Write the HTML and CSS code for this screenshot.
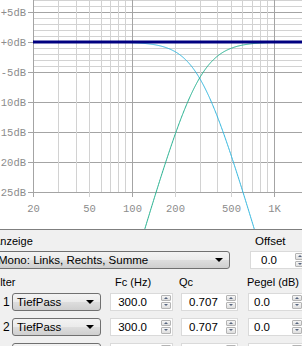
FILE: index.html
```html
<!DOCTYPE html>
<html lang="de">
<head>
  <meta charset="UTF-8" />
  <meta name="viewport" content="width=device-width, initial-scale=1" />
  <title>Frequenzweiche</title>
  <link rel="stylesheet" href="styles.css">
</head>
<body>

<div class="plot">
  <svg id="chart" width="302" height="229" xmlns="http://www.w3.org/2000/svg"></svg>
</div>

<div class="panel">
  <div class="display-row">
    <div class="display-group">
      <div class="label">Anzeige</div>
      <div class="combo combo-wide"><span>Mono: Links, Rechts, Summe</span><i class="arrow"></i></div>
    </div>
    <div class="offset-group">
      <div class="label label-offset">Offset</div>
      <div class="spin spin-offset">
        <div class="spin-field">0.0</div>
        <div class="spin-btns"><b class="up"></b><b class="down"></b></div>
      </div>
    </div>
  </div>

  <div class="filter-grid">
    <div class="head head-filter">Filter</div>
    <div class="head head-fc">Fc (Hz)</div>
    <div class="head head-qc">Qc</div>
    <div class="head head-pegel">Pegel (dB)</div>

    <div class="num">1</div>
    <div class="combo combo-type"><span>TiefPass</span><i class="arrow"></i></div>
    <div class="spin spin-fc"><div class="spin-field">300.0</div><div class="spin-btns"><b class="up"></b><b class="down"></b></div></div>
    <div class="spin spin-qc"><div class="spin-field">0.707</div><div class="spin-btns"><b class="up"></b><b class="down"></b></div></div>
    <div class="spin spin-pegel"><div class="spin-field">0.0</div><div class="spin-btns"><b class="up"></b><b class="down"></b></div></div>

    <div class="num">2</div>
    <div class="combo combo-type"><span>TiefPass</span><i class="arrow"></i></div>
    <div class="spin spin-fc"><div class="spin-field">300.0</div><div class="spin-btns"><b class="up"></b><b class="down"></b></div></div>
    <div class="spin spin-qc"><div class="spin-field">0.707</div><div class="spin-btns"><b class="up"></b><b class="down"></b></div></div>
    <div class="spin spin-pegel"><div class="spin-field">0.0</div><div class="spin-btns"><b class="up"></b><b class="down"></b></div></div>

    <div class="num">3</div>
    <div class="combo combo-type"><span>HochPass</span><i class="arrow"></i></div>
    <div class="spin spin-fc"><div class="spin-field">300.0</div><div class="spin-btns"><b class="up"></b><b class="down"></b></div></div>
    <div class="spin spin-qc"><div class="spin-field">0.707</div><div class="spin-btns"><b class="up"></b><b class="down"></b></div></div>
    <div class="spin spin-pegel"><div class="spin-field">0.0</div><div class="spin-btns"><b class="up"></b><b class="down"></b></div></div>
  </div>
</div>

<script src="script.js"></script>
</body>
</html>
```

FILE: styles.css
```css
* {
  margin: 0; padding: 0; box-sizing: border-box;
}
html, body {
  width: 302px;
  height: 346px;
  overflow: hidden;
}
body {
  background: #f0f0f0;
  font-family: 'Liberation Sans', Arial, sans-serif;
  font-size: 11px;
  color: #000;
}
.plot {
  height: 229px;
  background: #fff;
  overflow: hidden;
}
.plot svg {
  display: block;
}
.grid-minor { stroke: #d2d2d2; stroke-width: 1; }
.grid-major { stroke: #a4a4a4; stroke-width: 1; }
.axis-text {
  font-family: 'Liberation Mono', 'Courier New', monospace;
  font-size: 10.5px;
  fill: #8c8c8c;
}
.zero-line { stroke: #000080; stroke-width: 3; }
.curve { fill: none; stroke-width: 1; }
.curve-lp { stroke: #30b6de; }
.curve-hp { stroke: #22b08e; }

.panel {
  border-top: 1px solid #7f7f7f;
  padding-top: 4px;
}
.display-row {
  display: flex;
  gap: 20px;
}
.display-group {
  margin-left: -8px;
  width: 238px;
  flex-shrink: 0;
}
.label {
  height: 14px;
  line-height: 14px;
  margin-bottom: 3px;
  padding-left: 1px;
}
.label-offset {
  padding-left: 5px;
  font-size: 11.5px;
}
.offset-group {
  width: 57px;
  flex-shrink: 0;
}

.combo {
  height: 18px;
  display: flex;
  align-items: center;
  justify-content: space-between;
  border: 1px solid #707070;
  border-radius: 3px;
  background: linear-gradient(#f3f3f3 0%, #ebebeb 48%, #dddddd 52%, #cfcfcf 100%);
  padding: 0 6px 0 4px;
  font-size: 11.5px;
  white-space: nowrap;
}
.combo-wide {
  padding-left: 5px;
}
.arrow {
  width: 0;
  height: 0;
  border-left: 4px solid transparent;
  border-right: 4px solid transparent;
  border-top: 4px solid #000;
}

.spin {
  height: 18px;
  display: flex;
  align-items: center;
  background: #fff;
  border: 1px solid #dadada;
}
.spin-field {
  flex: 1;
  font-size: 11.5px;
}
.spin-btns {
  width: 10px;
  height: 14px;
  margin-right: 1px;
  display: flex;
  flex-direction: column;
  gap: 1px;
}
.spin-btns b {
  flex: 1;
  display: flex;
  align-items: center;
  justify-content: center;
  border: 1px solid #b4b4b4;
  border-radius: 1px;
  background: linear-gradient(#f6f6f6, #dedede);
}
.spin-btns b::after {
  content: '';
  width: 0;
  height: 0;
  border-left: 2px solid transparent;
  border-right: 2px solid transparent;
}
.spin-btns .up::after { border-bottom: 2px solid #56657f; }
.spin-btns .down::after { border-top: 2px solid #56657f; }

.spin-offset .spin-field { padding-left: 10px; }

.filter-grid {
  margin-top: 6px;
  display: grid;
  grid-template-columns: 12px 98px 71px 67px 56px;
  grid-template-rows: 14px;
  grid-auto-rows: 25px;
  align-items: center;
}
.head {
  line-height: 14px;
  white-space: nowrap;
}
.head-filter {
  grid-column: 1 / 3;
  margin-left: -9px;
}
.head-fc { padding-left: 5px; }
.head-qc { margin-left: -2px; }
.head-pegel { margin-left: -1px; }
.num {
  padding-left: 3px;
  font-size: 12px;
}
.combo-type {
  width: 89px;
}
.spin-fc { width: 63px; }
.spin-fc .spin-field { text-align: right; padding-right: 14px; }
.spin-qc { width: 57px; }
.spin-qc .spin-field { padding-left: 7px; }
.spin-pegel { width: 56px; }
.spin-pegel .spin-field { padding-left: 5px; }
```

FILE: script.js
```javascript
const NS = 'http://www.w3.org/2000/svg';
const svg = document.getElementById('chart');

// frequenz -> x, pegel -> y
const fx = f => 33 + 141.6 * Math.log10(f / 20);
const dy = db => 42 - 6 * db;

function add(tag, attrs, text) {
  const el = document.createElementNS(NS, tag);
  for (const k in attrs) el.setAttribute(k, attrs[k]);
  if (text) el.textContent = text;
  svg.appendChild(el);
  return el;
}

// horizontale Linien
const levels = [7, 6, 5, 4, 3, 2, 1, 0, -1, -2, -3, -4, -5, -10, -15, -20, -25];
levels.forEach(db => {
  const y = Math.round(dy(db)) + 0.5;
  const major = db % 5 === 0;
  add('line', { x1: major ? 28 : 33, y1: y, x2: 302, y2: y, class: major ? 'grid-major' : 'grid-minor' });
  if (major) {
    const txt = (db >= 0 ? '+' : '') + db + 'dB';
    add('text', { x: 26, y: y + 3.5, 'text-anchor': 'end', class: 'axis-text' }, txt);
  }
});

// vertikale Linien
const freqs = [];
for (let f = 20; f < 100; f += 10) freqs.push(f);
for (let f = 100; f < 1000; f += 100) freqs.push(f);
freqs.push(1000);
const labels = { 20: '20', 50: '50', 100: '100', 200: '200', 500: '500', 1000: '1K' };
freqs.forEach(f => {
  const x = Math.round(fx(f)) + 0.5;
  const major = f === 20 || f === 100 || f === 1000;
  add('line', { x1: x, y1: 0, x2: x, y2: labels[f] ? 197 : 192, class: major ? 'grid-major' : 'grid-minor' });
  if (labels[f]) {
    add('text', { x: x, y: 212, 'text-anchor': 'middle', class: 'axis-text' }, labels[f]);
  }
});

// Linkwitz-Riley 4. Ordnung, Fc = 300 Hz
function curve(hp) {
  const pts = [];
  for (let x = 33; x <= 302; x += 0.5) {
    const f = 20 * Math.pow(10, (x - 33) / 141.6);
    const r4 = Math.pow(f / 300, 4);
    const mag = hp ? r4 / (1 + r4) : 1 / (1 + r4);
    const y = dy(20 * Math.log10(mag));
    if (y > 260) continue;
    pts.push(x.toFixed(1) + ',' + y.toFixed(2));
  }
  add('polyline', { points: pts.join(' '), class: 'curve ' + (hp ? 'curve-hp' : 'curve-lp') });
}
curve(false);
curve(true);

add('line', { x1: 33, y1: 42, x2: 302, y2: 42, class: 'zero-line' });
```
